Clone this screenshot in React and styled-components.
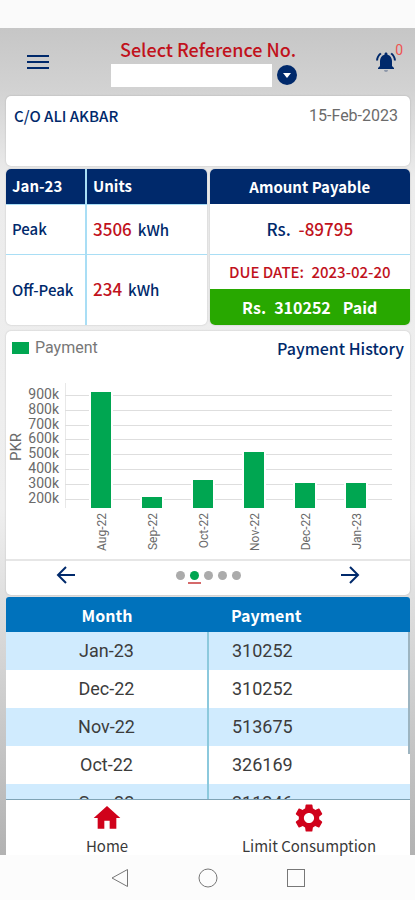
import React from 'react';
import styled, { createGlobalStyle } from 'styled-components';
import { MdHome, MdSettings } from 'react-icons/md';

const sans = `'Noto Sans CJK SC', 'Open Sans', sans-serif`;
const roboto = `Roboto, sans-serif`;

const navy = '#00296b';
const red = '#c1121c';
const green = '#00a651';
const line = '#a9def5';

const GlobalStyle = createGlobalStyle`
    * {
        box-sizing: border-box;
    }
    body {
        margin: 0;
        font-family: ${sans};
        color: ${navy};
    }
    button {
        padding: 0;
        border: 0;
        background: none;
        color: inherit;
        font: inherit;
        cursor: pointer;
    }
    svg {
        display: block;
    }
`;

const Screen = styled.div`
    display: flex;
    flex-direction: column;
    height: 100vh;
    background: #fcfcfc;
`;

const StatusBar = styled.div`
    flex: none;
    height: 28px;
    background: #fafafa;
`;

const Page = styled.main`
    flex: 1;
    min-height: 0;
    display: flex;
    flex-direction: column;
    padding: 0 5px 0 6px;
    background: linear-gradient(to bottom, #c6c6c6 0, #d2d2d2 60px, #ececec 150px, #efefef 480px, #d6d6d6 620px, #b2b2b2 100%);
`;

const TopBar = styled.header`
    flex: none;
    display: grid;
    grid-template-columns: 64px 1fr 64px;
    align-items: center;
    height: 68px;
`;

const MenuButton = styled.button`
    justify-self: center;
`;

const Reference = styled.div`
    display: flex;
    flex-direction: column;
    align-items: center;
    padding-top: 2px;
`;

const ReferenceLabel = styled.label`
    font-size: 18px;
    line-height: 24px;
    font-weight: 500;
    color: ${red};
`;

const ReferenceField = styled.div`
    display: flex;
    align-items: center;
    gap: 5px;
    height: 28px;
    padding-right: 8px;
`;

const ReferenceInput = styled.input`
    width: 161px;
    height: 23px;
    border: 0;
    padding: 0 6px;
    background: #fff;
    font: 14px ${sans};
`;

const AlertButton = styled.button`
    position: relative;
    justify-self: center;
    margin-left: 16px;
`;

const AlertCount = styled.span`
    position: absolute;
    top: -8px;
    right: -5px;
    font: 14px/16px ${roboto};
    color: #ee5350;
`;

const Card = styled.section`
    flex: none;
    overflow: hidden;
    border-radius: 5px;
    background: #fff;
    box-shadow: 0 0 2px rgba(0, 0, 0, 0.2);
`;

const CustomerCard = styled(Card)`
    display: flex;
    justify-content: space-between;
    height: 70px;
    padding: 8px 12px 8px 8px;
    line-height: 24px;
`;

const CustomerName = styled.span`
    font-size: 15px;
    font-weight: 500;
`;

const BillDate = styled.span`
    font: 16px/24px ${roboto};
    color: #6b6b6b;
`;

const Summary = styled.div`
    flex: none;
    display: grid;
    grid-template-columns: 1fr 1fr;
    gap: 3px;
    margin: 3px 0 6px;
`;

const UnitsTable = styled.table`
    width: 100%;
    border-collapse: collapse;
    table-layout: fixed;
    text-align: left;

    th,
    td {
        height: 50px;
        padding: 0 6px;
        font-size: 15px;
        line-height: 24px;
        font-weight: 500;
    }
    th + th,
    td + td {
        border-left: 2px solid ${line};
    }
    thead th {
        height: 35px;
        background: ${navy};
        color: #fff;
        font-weight: 700;
    }
    thead th:first-child {
        width: 80px;
    }
    tbody tr {
        border-top: 1px solid ${line};
    }
    tbody tr:last-child td {
        height: 71px;
    }
`;

const Reading = styled.span`
    margin-right: 6px;
    font-size: 17px;
    color: ${red};
`;

const PayableTitle = styled.h2`
    margin: 0;
    background: ${navy};
    color: #fff;
    font-size: 15px;
    line-height: 35px;
    text-align: center;
`;

const PayableAmount = styled.div`
    border-bottom: 1px solid ${line};
    font-size: 17px;
    line-height: 50px;
    font-weight: 500;
    text-align: center;

    span {
        margin-left: 4px;
        color: ${red};
    }
`;

const DueDate = styled.div`
    font-size: 15px;
    line-height: 34px;
    font-weight: 500;
    text-align: center;
    color: ${red};

    span {
        margin-left: 4px;
    }
`;

const Paid = styled.div`
    display: flex;
    justify-content: center;
    gap: 8px;
    background: #28a800;
    color: #fff;
    font-size: 16px;
    line-height: 36px;
    font-weight: 700;

    span:last-child {
        margin-left: 4px;
    }
`;

const ChartHead = styled.div`
    display: flex;
    justify-content: space-between;
    align-items: center;
    height: 34px;
    padding: 0 6px;
`;

const Legend = styled.div`
    display: flex;
    align-items: center;
    gap: 6px;
    font: 16px/24px ${roboto};
    color: #777;

    &::before {
        content: '';
        width: 17px;
        height: 12px;
        background: ${green};
    }
`;

const ChartTitle = styled.h2`
    margin: 0;
    font-size: 16px;
    line-height: 24px;
    font-weight: 500;
`;

const Chart = styled.svg`
    width: 100%;
    height: auto;
    font-family: ${roboto};
    fill: #6a6a6a;
`;

const Pager = styled.div`
    display: grid;
    grid-template-columns: 120px 1fr 120px;
    align-items: center;
    justify-items: center;
    height: 36px;
    padding-bottom: 6px;
    border-top: 2px solid #e6e6e6;
`;

const Dots = styled.div`
    display: flex;
    gap: 5px;
`;

const Dot = styled.button`
    position: relative;
    width: 9px;
    height: 9px;
    border-radius: 50%;
    background: ${({ $active }) => ($active ? green : '#ababab')};

    &::after {
        content: '';
        display: ${({ $active }) => ($active ? 'block' : 'none')};
        position: absolute;
        top: 11px;
        left: -2px;
        width: 13px;
        height: 2px;
        background: #d5696a;
    }
`;

const HistoryPanel = styled.section`
    position: relative;
    flex: 1;
    min-height: 0;
    margin-top: 2px;
    border-bottom: 1px solid #7fa3b5;
`;

const HistoryScroll = styled.div`
    height: 100%;
    overflow-y: auto;
    scrollbar-width: none;
    background: #fff;
    border-radius: 3px 3px 0 0;
`;

const ScrollThumb = styled.div`
    position: absolute;
    top: 35px;
    right: 0;
    width: 2px;
    height: 122px;
    background: #9db4c0;
`;

const HistoryTable = styled.table`
    width: 100%;
    border-collapse: collapse;
    table-layout: fixed;
    font-family: ${roboto};
    color: #3c3c3c;

    th {
        height: 35px;
        padding: 0;
        background: #0072bc;
        color: #fff;
        font: 700 16px/24px ${sans};
    }
    td {
        height: 38px;
        padding: 0;
        font-size: 18px;
        line-height: 24px;
        text-align: center;
    }
    th:last-child,
    td:last-child {
        padding-left: 23px;
        text-align: left;
    }
    td:last-child {
        border-left: 2px solid #8cc9dd;
    }
    tbody tr:nth-child(odd) {
        background: #d0ebfe;
    }
`;

const TabBar = styled.nav`
    flex: none;
    display: grid;
    grid-template-columns: 1fr 1fr;
    height: 55px;
    background: #fff;
`;

const Tab = styled.a`
    display: grid;
    grid-template-rows: 36px 19px;
    place-items: center;
    color: #3a3a3a;
    font-size: 15px;
    line-height: 19px;
    text-decoration: none;

    svg {
        color: #d0021b;
    }
`;

const SystemBar = styled.div`
    flex: none;
    display: flex;
    justify-content: center;
    align-items: flex-start;
    gap: 68px;
    height: 45px;
    padding-top: 13px;
`;

const months = ['Aug-22', 'Sep-22', 'Oct-22', 'Nov-22', 'Dec-22', 'Jan-23'];
const amounts = [917, 211, 326, 514, 310, 310];
const ticks = [900, 800, 700, 600, 500, 400, 300, 200];

const history = [
    ['Jan-23', '310252'],
    ['Dec-22', '310252'],
    ['Nov-22', '513675'],
    ['Oct-22', '326169'],
    ['Sep-22', '211246'],
];

// amounts are in thousands of rupees
const toY = (value) => Math.round(134 - (value - 200) * 0.149);

const PaymentChart = () => (
    <Chart viewBox="0 0 404 194" role="img" aria-label="Payment">
        <path d="M59.5 18V143" stroke="#e8e8e8" />
        {ticks.map((t) => (
            <g key={t}>
                <path d={`M59 ${toY(t) + 0.5}H386`} stroke="#dedede" />
                <text x="53" y={toY(t) + 4} fontSize="14" textAnchor="end">{t}k</text>
            </g>
        ))}
        <text transform="translate(15 82) rotate(-90)" fontSize="15" textAnchor="middle">PKR</text>
        {months.map((month, i) => {
            const x = 85 + i * 51;
            const y = toY(amounts[i]);
            return (
                <g key={month}>
                    <rect x={x - 2} y={y} width="24" height={143 - y} fill="#fff" />
                    <rect x={x} y={y} width="20" height={143 - y} fill={green} />
                    <text transform={`translate(${x + 15} 148) rotate(-90)`} fontSize="12" textAnchor="end">
                        {month}
                    </text>
                </g>
            );
        })}
    </Chart>
);

const Bell = () => (
    <svg width="24" height="24" viewBox="0 0 24 24" fill={navy}>
        <path d="M7.58 4.08L6.15 2.65C3.75 4.48 2.17 7.3 2.03 10.5h2c.15-2.65 1.51-4.97 3.55-6.42z" />
        <path d="M19.97 10.5h2c-.15-3.2-1.73-6.02-4.12-7.85l-1.42 1.43c2.02 1.45 3.39 3.77 3.54 6.42z" />
        <path d="M18 11c0-3.07-1.64-5.64-4.5-6.32V4c0-.83-.67-1.5-1.5-1.5s-1.5.67-1.5 1.5v.68C7.63 5.36 6 7.92 6 11v5l-2 2v1h16v-1l-2-2z" />
        <path d="M10 20h4a2 2 0 0 1-4 0z" fill="#8d97a8" />
    </svg>
);

const Arrow = ({ d }) => (
    <svg width="20" height="20" viewBox="0 0 20 20" fill="none" stroke={navy} strokeWidth="2">
        <path d={d} />
    </svg>
);

const App = () => {
    return (
        <Screen>
            <GlobalStyle />
            <StatusBar />
            <Page>
                <TopBar>
                    <MenuButton aria-label="Menu">
                        <svg width="22" height="16" viewBox="0 0 22 16" stroke={navy} strokeWidth="2">
                            <path d="M0 2H22M0 8H22M0 14H22" />
                        </svg>
                    </MenuButton>
                    <Reference>
                        <ReferenceLabel htmlFor="reference">Select Reference No.</ReferenceLabel>
                        <ReferenceField>
                            <ReferenceInput id="reference" type="text" />
                            <button aria-label="Choose reference">
                                <svg width="20" height="20" viewBox="0 0 20 20">
                                    <circle cx="10" cy="10" r="10" fill={navy} />
                                    <path d="M6 8H14L10 13Z" fill="#fff" />
                                </svg>
                            </button>
                        </ReferenceField>
                    </Reference>
                    <AlertButton aria-label="Notifications">
                        <Bell />
                        <AlertCount>0</AlertCount>
                    </AlertButton>
                </TopBar>

                <CustomerCard>
                    <CustomerName>C/O ALI AKBAR</CustomerName>
                    <BillDate>15-Feb-2023</BillDate>
                </CustomerCard>

                <Summary>
                    <Card>
                        <UnitsTable>
                            <thead>
                                <tr>
                                    <th>Jan-23</th>
                                    <th>Units</th>
                                </tr>
                            </thead>
                            <tbody>
                                <tr>
                                    <td>Peak</td>
                                    <td><Reading>3506</Reading>kWh</td>
                                </tr>
                                <tr>
                                    <td>Off-Peak</td>
                                    <td><Reading>234</Reading>kWh</td>
                                </tr>
                            </tbody>
                        </UnitsTable>
                    </Card>
                    <Card>
                        <PayableTitle>Amount Payable</PayableTitle>
                        <PayableAmount>Rs. <span>-89795</span></PayableAmount>
                        <DueDate>DUE DATE: <span>2023-02-20</span></DueDate>
                        <Paid>
                            <span>Rs.</span>
                            <span>310252</span>
                            <span>Paid</span>
                        </Paid>
                    </Card>
                </Summary>

                <Card>
                    <ChartHead>
                        <Legend>Payment</Legend>
                        <ChartTitle>Payment History</ChartTitle>
                    </ChartHead>
                    <PaymentChart />
                    <Pager>
                        <button aria-label="Previous"><Arrow d="M19 10H2M10 2L2 10L10 18" /></button>
                        <Dots>
                            {[0, 1, 2, 3, 4].map((n) => (
                                <Dot key={n} $active={n === 1} aria-label={`Slide ${n + 1}`} />
                            ))}
                        </Dots>
                        <button aria-label="Next"><Arrow d="M1 10H18M10 2L18 10L10 18" /></button>
                    </Pager>
                </Card>

                <HistoryPanel>
                    <HistoryScroll>
                        <HistoryTable>
                            <thead>
                                <tr>
                                    <th>Month</th>
                                    <th>Payment</th>
                                </tr>
                            </thead>
                            <tbody>
                                {history.map(([month, payment]) => (
                                    <tr key={month}>
                                        <td>{month}</td>
                                        <td>{payment}</td>
                                    </tr>
                                ))}
                            </tbody>
                        </HistoryTable>
                    </HistoryScroll>
                    <ScrollThumb />
                </HistoryPanel>

                <TabBar>
                    <Tab href="#home">
                        <MdHome size={32} />
                        Home
                    </Tab>
                    <Tab href="#limit">
                        <MdSettings size={34} />
                        Limit Consumption
                    </Tab>
                </TabBar>
            </Page>

            <SystemBar>
                <button aria-label="Back">
                    <svg width="20" height="20" viewBox="0 0 20 20" fill="none" stroke="#777">
                        <path d="M17.5 1.5V18.5L2 10Z" />
                    </svg>
                </button>
                <button aria-label="Home screen">
                    <svg width="20" height="20" viewBox="0 0 20 20" fill="none" stroke="#777">
                        <circle cx="10" cy="10" r="9" />
                    </svg>
                </button>
                <button aria-label="Recent apps">
                    <svg width="20" height="20" viewBox="0 0 20 20" fill="none" stroke="#777">
                        <rect x="1.5" y="1.5" width="17" height="17" />
                    </svg>
                </button>
            </SystemBar>
        </Screen>
    );
};

export default App;
